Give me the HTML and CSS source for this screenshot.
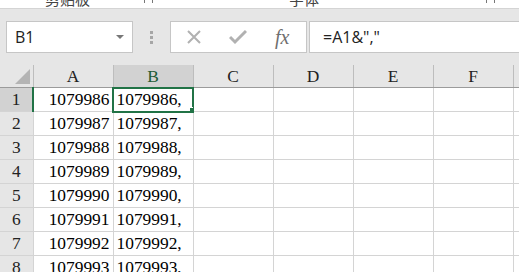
FILE: index.html
```html
<!DOCTYPE html>
<html lang="zh">
<head>
    <meta charset="UTF-8">
    <title>Sheet</title>
    <link rel="stylesheet" href="styles.css">
</head>
<body>
    <div class="ribbon-tail">
        <span class="group-label clip-left">剪贴板</span>
        <span class="launcher l1"></span>
        <span class="group-label clip-mid">字体</span>
        <span class="launcher l2"></span>
    </div>

    <div class="formula-bar">
        <div class="name-box">
            <span>B1</span>
            <span class="caret"></span>
        </div>
        <div class="grip"><i></i><i></i><i></i></div>
        <div class="fx-buttons">
            <svg class="btn-icon" width="16" height="16" viewBox="0 0 16 16">
                <path d="M2 2 L14 14 M14 2 L2 14" stroke="#b1b1b1" stroke-width="2" fill="none"/>
            </svg>
            <svg class="btn-icon" width="18" height="16" viewBox="0 0 18 16">
                <path d="M1 8 L6 13 L17 2" stroke="#b1b1b1" stroke-width="3" fill="none"/>
            </svg>
            <span class="fx">fx</span>
        </div>
        <div class="formula-input">=A1&amp;","</div>
    </div>

    <div class="grid-wrap">
    <table class="sheet">
        <colgroup>
            <col class="col-rh">
            <col class="col-c"><col class="col-c"><col class="col-c">
            <col class="col-c"><col class="col-c"><col class="col-c"><col class="col-c">
        </colgroup>
        <tr class="head">
            <th class="corner"><span class="tri"></span></th>
            <th>A</th><th class="sel">B</th><th>C</th><th>D</th><th>E</th><th>F</th><th></th>
        </tr>
        <tr>
            <th class="rh sel">1</th><td class="num">1079986</td><td class="active">1079986,<span class="handle"></span></td><td></td><td></td><td></td><td></td><td></td>
        </tr>
        <tr>
            <th class="rh">2</th><td class="num">1079987</td><td>1079987,</td><td></td><td></td><td></td><td></td><td></td>
        </tr>
        <tr>
            <th class="rh">3</th><td class="num">1079988</td><td>1079988,</td><td></td><td></td><td></td><td></td><td></td>
        </tr>
        <tr>
            <th class="rh">4</th><td class="num">1079989</td><td>1079989,</td><td></td><td></td><td></td><td></td><td></td>
        </tr>
        <tr>
            <th class="rh">5</th><td class="num">1079990</td><td>1079990,</td><td></td><td></td><td></td><td></td><td></td>
        </tr>
        <tr>
            <th class="rh">6</th><td class="num">1079991</td><td>1079991,</td><td></td><td></td><td></td><td></td><td></td>
        </tr>
        <tr>
            <th class="rh">7</th><td class="num">1079992</td><td>1079992,</td><td></td><td></td><td></td><td></td><td></td>
        </tr>
        <tr>
            <th class="rh">8</th><td class="num">1079993</td><td>1079993,</td><td></td><td></td><td></td><td></td><td></td>
        </tr>
    </table>
    </div>
</body>
</html>
```

FILE: styles.css
```css
body {
    margin: 0;
    width: 519px;
    height: 272px;
    overflow: hidden;
    background: #e6e6e6;
    font-family: "Liberation Sans", "Noto Sans CJK SC", sans-serif;
}

/* bottom edge of the ribbon, mostly cut off */
.ribbon-tail {
    position: relative;
    height: 8px;
    background: #fff;
    border-bottom: 1px solid #d4d4d4;
    overflow: hidden;
}
.group-label {
    position: absolute;
    top: -12px;
    font-size: 15px;
    color: #444;
}
.clip-left { left: 45px; }
.clip-mid { left: 289px; }
.launcher {
    position: absolute;
    top: -6px;
    width: 7px;
    height: 9px;
    border-left: 1px solid #777;
    border-right: 1px solid #777;
}
.l1 { left: 144px; }
.l2 { left: 486px; }

.formula-bar {
    display: flex;
    align-items: center;
    padding: 12px 0 12px 6px;
    height: 32px;
}
.name-box {
    height: 30px;
    background: #fff;
    border: 1px solid #c6c6c6;
    display: flex;
    align-items: center;
    justify-content: space-between;
    padding: 0 8px;
    width: 109px;
    font-family: "Open Sans", "Liberation Sans", sans-serif;
    font-size: 16px;
    color: #222;
}
.caret {
    width: 0;
    height: 0;
    border-left: 4px solid transparent;
    border-right: 4px solid transparent;
    border-top: 4px solid #777;
}
.grip {
    width: 37px;
    display: flex;
    flex-direction: column;
    align-items: center;
    gap: 2px;
}
.grip i {
    width: 3px;
    height: 3px;
    background: #a6a6a6;
}
.fx-buttons {
    height: 30px;
    background: #fff;
    border: 1px solid #c6c6c6;
    display: flex;
    align-items: center;
    gap: 27px;
    padding-left: 15px;
    width: 120px;
}
.fx {
    font-family: "Liberation Serif", serif;
    font-style: italic;
    font-size: 20px;
    color: #6f6f6f;
    margin-left: 1px;
}
.formula-input {
    flex: 1;
    margin-left: 2px;
    height: 30px;
    background: #fff;
    border: 1px solid #c6c6c6;
    border-right: none;
    padding-left: 13px;
    line-height: 30px;
    font-family: "Open Sans", "Liberation Sans", sans-serif;
    font-size: 16px;
    color: #222;
}

.grid-wrap {
    width: 519px;
    overflow: hidden;
}
.sheet {
    width: 593px;
    border-collapse: collapse;
    table-layout: fixed;
    background: #fff;
    font-family: "Liberation Serif", serif;
    font-size: 17.4px;
}
.col-rh { width: 33px; }
.col-c { width: 80px; }

.sheet th, .sheet td {
    border-right: 1px solid #d4d4d4;
    border-bottom: 1px solid #d4d4d4;
    padding: 0 3px;
    height: 23px;
    white-space: nowrap;
    overflow: hidden;
}
.head th {
    background: #e6e6e6;
    font-weight: normal;
    color: #222;
    border-bottom: 1px solid #9b9b9b;
    border-right: 1px solid #bdbdbd;
    height: 22px;
    line-height: 22px;
}
.head th.sel {
    background: #d2d2d2;
    color: #1e5c36;
    border-bottom: 1px solid #217346;
}
.corner {
    position: relative;
}
.tri {
    position: absolute;
    right: 3px;
    bottom: 3px;
    width: 0;
    height: 0;
    border-left: 15px solid transparent;
    border-bottom: 15px solid #b4b4b4;
}
.rh {
    background: #e6e6e6;
    font-weight: normal;
    color: #222;
    text-align: center;
    border-right: 1px solid #bdbdbd;
    border-bottom: 1px solid #d4d4d4;
}
.rh.sel {
    background: #d2d2d2;
    border-right: 2px solid #217346;
}
.num { text-align: right; }
.active {
    position: relative;
    outline: 2px solid #217346;
    outline-offset: -1px;
}
.handle {
    position: absolute;
    right: -4px;
    bottom: -4px;
    width: 6px;
    height: 6px;
    background: #217346;
    border: 1px solid #fff;
}
```
